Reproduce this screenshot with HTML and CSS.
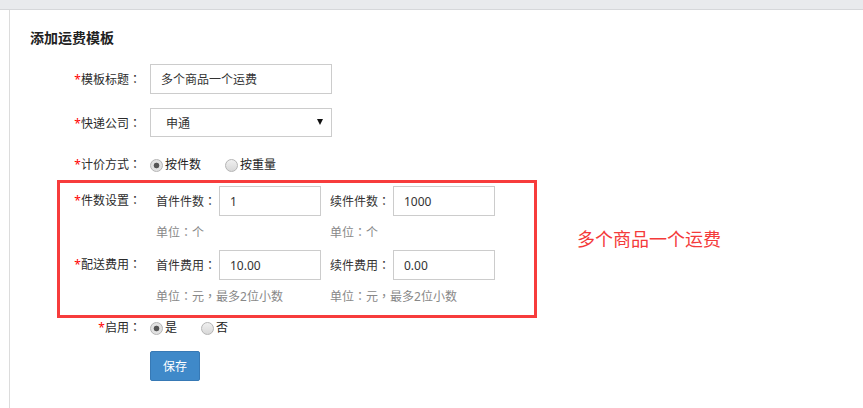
FILE: index.html
```html
<!DOCTYPE html>
<html lang="zh-CN">
<head>
<meta charset="utf-8">
<title>添加运费模板</title>
<link rel="stylesheet" href="styles.css">
</head>
<body>
<div class="topbar"></div>
<div class="main">
  <h2 class="title">添加运费模板</h2>

  <div class="row row-title">
    <label class="label"><span class="req">*</span>模板标题<span class="p" lang="zh-TW">：</span></label>
    <input class="input input-wide" type="text" value="多个商品一个运费">
  </div>

  <div class="row row-select">
    <label class="label"><span class="req">*</span>快递公司<span class="p" lang="zh-TW">：</span></label>
    <div class="select-box">
      <span class="select-text">申通</span>
      <span class="select-arrow"></span>
    </div>
  </div>

  <div class="row row-radio">
    <label class="label"><span class="req">*</span>计价方式<span class="p" lang="zh-TW">：</span></label>
    <div class="radios">
      <span class="radio-item"><span class="radio checked"></span>按件数</span>
      <span class="radio-item"><span class="radio"></span>按重量</span>
    </div>
  </div>

  <div class="box-row">
    <div class="box">
      <div class="box-line">
        <label class="box-label"><span class="req">*</span>件数设置<span class="p" lang="zh-TW">：</span></label>
        <div class="fields">
          <div class="field">
            <div class="field-main"><span class="sub-label">首件件数<span class="p" lang="zh-TW">：</span></span><input class="input input-small" type="text" value="1"></div>
            <div class="hint">单位<span class="p" lang="zh-TW">：</span>个</div>
          </div>
          <div class="field">
            <div class="field-main"><span class="sub-label">续件件数<span class="p" lang="zh-TW">：</span></span><input class="input input-small" type="text" value="1000"></div>
            <div class="hint">单位<span class="p" lang="zh-TW">：</span>个</div>
          </div>
        </div>
      </div>
      <div class="box-line">
        <label class="box-label"><span class="req">*</span>配送费用<span class="p" lang="zh-TW">：</span></label>
        <div class="fields">
          <div class="field">
            <div class="field-main"><span class="sub-label">首件费用<span class="p" lang="zh-TW">：</span></span><input class="input input-small" type="text" value="10.00"></div>
            <div class="hint">单位<span class="p" lang="zh-TW">：</span>元<span class="p" lang="zh-TW">，</span>最多2位小数</div>
          </div>
          <div class="field">
            <div class="field-main"><span class="sub-label">续件费用<span class="p" lang="zh-TW">：</span></span><input class="input input-small" type="text" value="0.00"></div>
            <div class="hint">单位<span class="p" lang="zh-TW">：</span>元<span class="p" lang="zh-TW">，</span>最多2位小数</div>
          </div>
        </div>
      </div>
    </div>
    <div class="note">多个商品一个运费</div>
  </div>

  <div class="row row-enable">
    <label class="label"><span class="req">*</span>启用<span class="p" lang="zh-TW">：</span></label>
    <div class="radios">
      <span class="radio-item"><span class="radio checked"></span>是</span>
      <span class="radio-item"><span class="radio"></span>否</span>
    </div>
  </div>

  <div class="row row-btn">
    <span class="label"></span>
    <button class="btn" type="button">保存</button>
  </div>
</div>
</body>
</html>
```

FILE: styles.css
```css
* { box-sizing: border-box; }
html, body { margin: 0; padding: 0; height: 100%; }
body {
  font-family: "Noto Sans", "Noto Sans CJK SC", sans-serif;
  font-size: 12px;
  color: #333;
  background: #fff;
  display: flex;
  flex-direction: column;
  overflow: hidden;
}
.p {
  font-family: "Noto Sans CJK TC", sans-serif;
  line-height: 1;
}
.topbar {
  height: 10px;
  background: #e9eaed;
  border-bottom: 1px solid #d6d7da;
  flex: none;
}
.main {
  flex: 1;
  margin-left: 9px;
  border-left: 1px solid #dcdcdc;
}
.title {
  margin: 18px 0 0 20px;
  font-size: 14px;
  line-height: 20px;
  font-weight: bold;
  color: #222;
}
.row {
  display: flex;
  align-items: center;
}
.label {
  width: 131px;
  text-align: right;
  flex: none;
  margin-right: 9px;
  color: #2b2b2b;
}
.req { color: #f00; }
.row-title { margin-top: 16px; }
.row-select { margin-top: 14px; }
.row-radio { margin-top: 18px; line-height: 20px; }
.input {
  font-family: "Noto Sans", "Noto Sans CJK SC", sans-serif;
  font-size: 12px;
  color: #333;
  height: 30px;
  border: 1px solid #ccc;
  border-radius: 0;
  padding: 0 10px;
  outline: none;
  background: #fff;
}
.input-wide { width: 182px; }
.input-small { width: 102px; }
.select-box {
  width: 182px;
  height: 29px;
  border: 1px solid #ccc;
  display: flex;
  align-items: center;
  justify-content: space-between;
  padding: 0 8px 0 15px;
}
.select-arrow {
  width: 0;
  height: 0;
  border-left: 3px solid transparent;
  border-right: 3px solid transparent;
  border-top: 6px solid #111;
  margin-top: -2px;
}
.radios { display: flex; align-items: center; }
.radio-item {
  display: flex;
  align-items: center;
  margin-right: 24px;
  color: #222;
}
.radio {
  width: 13px;
  height: 13px;
  border-radius: 50%;
  border: 1px solid #b5b5b5;
  background: linear-gradient(#f0f0f0, #d8d8d8);
  margin-right: 2px;
  flex: none;
}
.radio.checked {
  background: radial-gradient(circle, #555 0 2.5px, #e2e2e2 3.2px);
}
.box-row {
  display: flex;
  align-items: flex-start;
  margin-top: 5px;
}
.box {
  width: 480px;
  margin-left: 47px;
  border: 3px solid #f73c3c;
  padding: 3px 0 1px 0;
}
.box-line {
  display: flex;
  align-items: flex-start;
}
.box-label {
  width: 81px;
  flex: none;
  text-align: right;
  line-height: 30px;
  color: #2b2b2b;
}
.fields {
  display: flex;
  margin-left: 15px;
}
.field { margin-right: 9px; }
.field-main { display: flex; align-items: center; }
.sub-label {
  width: 63px;
  flex: none;
  color: #333;
}
.hint {
  color: #888;
  line-height: 20px;
  margin: 7px 0 7px 0;
}
.note {
  margin-left: 40px;
  margin-top: 47px;
  font-size: 18px;
  line-height: 24px;
  color: #f43a3a;
}
.row-enable { line-height: 20px; }
.row-btn { margin-top: 13px; }
.btn {
  width: 50px;
  height: 30px;
  background: #3f89c9;
  border: 1px solid #3779b5;
  border-radius: 2px;
  color: #fff;
  font-family: "Noto Sans", "Noto Sans CJK SC", sans-serif;
  font-size: 12px;
  padding: 0;
}
```
